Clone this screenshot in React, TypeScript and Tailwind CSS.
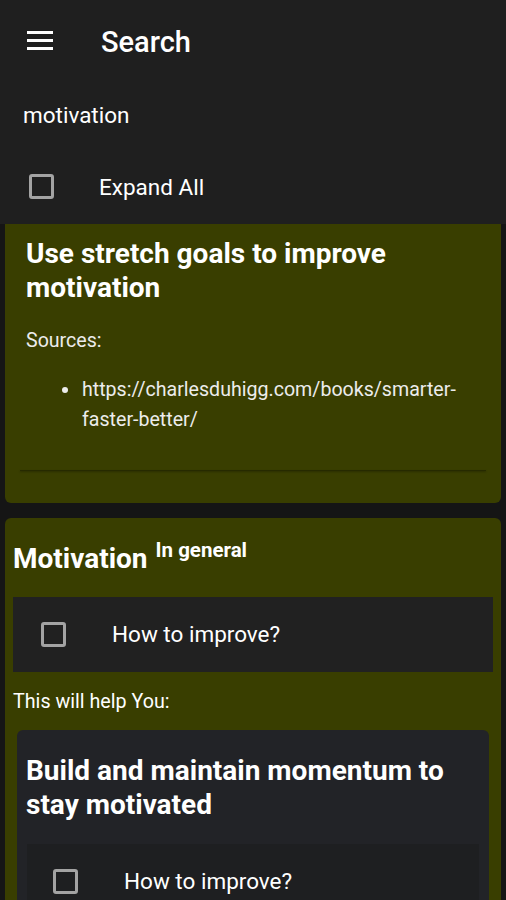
import React from "react";

const Checkbox = () => (
  <div className="w-[25px] h-[25px] rounded-[3px] border-[3px] border-[#a3a3a3] shrink-0" />
);

const CheckRow = ({ className = "" }: { className?: string }) => (
  <div className={`flex items-center bg-[#212121] h-[75px] ${className}`}>
    <div className="pl-[28px] w-[99px] shrink-0">
      <Checkbox />
    </div>
    <span className="text-[22.5px] text-white">How to improve?</span>
  </div>
);

const App = () => {
  return (
    <div
      className="w-[506px] h-[900px] overflow-hidden bg-[#151515] text-white"
      style={{ fontFamily: "Roboto, 'Noto Sans', sans-serif" }}
    >
      {/* Header */}
      <div className="bg-[#1f1f1f]">
        <div className="h-[84px] flex items-center">
          <div className="pl-[27px] w-[101px] shrink-0">
            <div className="w-[26px] flex flex-col gap-[5px] -mt-[3px]">
              <div className="h-[3px] bg-white" />
              <div className="h-[3px] bg-white" />
              <div className="h-[3px] bg-white" />
            </div>
          </div>
          <span className="text-[29px] font-medium mt-[1px]">Search</span>
        </div>
        <div className="h-[64px] flex items-center pl-[23px] text-[22.5px]">motivation</div>
        <div className="h-[76px] flex items-center">
          <div className="pl-[29px] w-[99px] shrink-0">
            <Checkbox />
          </div>
          <span className="text-[22.5px] mt-[3px]">Expand All</span>
        </div>
      </div>

      {/* Card 1 */}
      <div className="mx-[5px] bg-[#393e00] rounded-b-[6px] pt-[13px] pb-[32px]">
        <h2 className="px-[21px] text-[28px] leading-[34px] font-bold">
          Use stretch goals to improve motivation
        </h2>
        <p className="px-[21px] mt-[24px] text-[19.6px] leading-[24px] text-[#ececec]">Sources:</p>
        <ul className="mt-[22px] pl-[76px] pr-[30px] list-disc text-[19.6px] leading-[30px] text-[#ececec]">
          <li className="pl-[1px]">https://charlesduhigg.com/books/smarter-faster-better/</li>
        </ul>
        <div className="mx-[15px] mt-[35px] h-px bg-[#262a00] shadow-[0_1px_2px_rgba(0,0,0,0.35)]" />
      </div>

      {/* Card 2 */}
      <div className="mx-[5px] mt-[15px] bg-[#393e00] rounded-[6px] pt-[24px] pb-[20px]">
        <div className="px-[8px] flex items-start">
          <span className="text-[28px] leading-[34px] font-bold">Motivation</span>
          <span className="ml-[8px] text-[20.5px] leading-[20px] font-bold -mt-[2px]">In general</span>
        </div>
        <CheckRow className="mx-[8px] mt-[21px]" />
        <p className="px-[8px] mt-[18px] text-[19.7px] leading-[24px]">This will help You:</p>
        <div className="mx-[12px] mt-[16px] bg-[#222327] rounded-[6px] pt-[24px] pb-[10px]">
          <h2 className="px-[9px] text-[28px] leading-[34px] font-bold">
            Build and maintain momentum to stay motivated
          </h2>
          <div className="mx-[10px] mt-[22px] bg-[#1e1f21] h-[75px] flex items-center">
            <div className="pl-[26px] w-[97px] shrink-0">
              <Checkbox />
            </div>
            <span className="text-[22.5px]">How to improve?</span>
          </div>
        </div>
      </div>
    </div>
  );
};

export default App;
